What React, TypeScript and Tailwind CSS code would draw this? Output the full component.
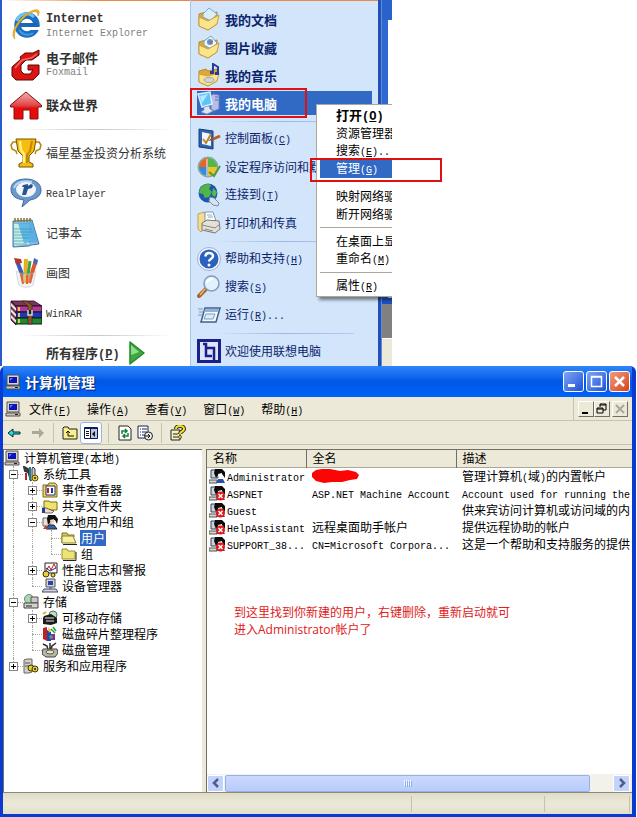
import type { ReactNode } from "react";

/* ---------- text ---------- */

// "&F" marks the access key, latin runs use the half-width face
const Label = ({ text, bold = false }: { text: string; bold?: boolean }) => {
  const runs = text.split(/([\x20-\x7e]+)/).filter(Boolean);
  return (
    <span className={bold ? "whitespace-pre font-bold text-[13px]" : "whitespace-pre text-[12px]"}>
      {runs.map((run, i) => {
        if (!/^[\x20-\x7e]+$/.test(run)) return run;
        const [before, after] = run.split("&");
        return (
          <span
            key={i}
            className={
              bold
                ? "font-['Liberation_Mono',monospace] text-[12px] leading-none"
                : "font-['Liberation_Mono',monospace] text-[10px] leading-none"
            }
          >
            {before}
            {after && (
              <>
                <u>{after[0]}</u>
                {after.slice(1)}
              </>
            )}
          </span>
        );
      })}
    </span>
  );
};

/* ---------- start menu icons ---------- */

const IeIcon = () => (
  <svg viewBox="0 0 32 32" className="size-8">
    <circle cx="17" cy="16" r="9.5" fill="none" stroke="#1c6fc4" strokeWidth="6.500" />
    <path d="M7 12a10 10 0 0 1 17-4" fill="none" stroke="#6fc3f2" strokeWidth="3" />
    <path d="M9 21a10 10 0 0 0 14 3" fill="none" stroke="#3f9be0" strokeWidth="2" />
    <path d="M10 14h18v4H10z" fill="#1b66b8" />
    <path d="M20 18h10v3H20z" fill="#fff" />
    <path d="M5 30C-2 25 10 5 24 1c6-1 6 2 4 6 0-4-2-5-5-4C12 7 2 22 5 30z" fill="#f0b629" stroke="#c98a10" strokeWidth=".5" />
  </svg>
);

const FoxmailIcon = () => (
  <svg viewBox="0 0 32 32" className="size-8">
    <path d="M29 1v5l-7 5h-6l-5 5v6l3 3h6l3-4h-5v-5h11v9l-6 6H6l-4-4v-9l9-8-1-2 5-4 8 0z" fill="#dc1414" stroke="#5c0606" />
    <path d="M5 19l7-8 9-2 6-4" fill="none" stroke="#f46a5e" strokeWidth="1.500" />
  </svg>
);

const HouseIcon = () => (
  <svg viewBox="0 0 32 32" className="size-8">
    <defs>
      <linearGradient id="roof" x2="0" y2="1">
        <stop offset="0" stopColor="#f7b0b0" />
        <stop offset=".5" stopColor="#df4444" />
        <stop offset=".6" stopColor="#e80b0b" />
      </linearGradient>
    </defs>
    <path d="M16 3l15.500 13v2H28v12h-8v-9h-7v9H4V18H.5v-2z" fill="url(#roof)" stroke="#8a1212" />
  </svg>
);

const TrophyIcon = () => (
  <svg viewBox="0 0 32 32" className="size-8">
    <path d="M7 5H3L1 8l1 4 4 2 1 3M25 5h4l2 3-1 4-4 2-1 3" fill="none" stroke="#b8860b" strokeWidth="1.500" />
    <path d="M6 2h20l-2 12-5 5v6l4 2v3H9v-3l4-2v-6l-5-5z" fill="#f5bd0c" stroke="#7a5200" />
    <path d="M10 4l1 9 3 4v9" fill="none" stroke="#ffee86" strokeWidth="2.500" />
    <path d="M22 4l-2 10-3 4v8" fill="none" stroke="#c98500" strokeWidth="2" />
  </svg>
);

const RealIcon = () => (
  <svg viewBox="0 0 32 32" className="size-8">
    <path d="M16 2c8 0 15 4 15 11 0 6-5 9-11 10l-8 7 2-7C6 22 1 19 1 12 1 5 8 2 16 2z" fill="#6b98cc" stroke="#3d6aa0" />
    <path d="M4 11c2-6 10-8 18-6" fill="none" stroke="#b9d7f2" strokeWidth="2" />
    <ellipse cx="16" cy="12.500" rx="10" ry="7.500" fill="#f1f6fc" />
    <path d="M13 8l5-1v2l3-2 2 1-1 3-4 1-2 6h-4l2-8h-2z" fill="#26548f" />
  </svg>
);

const NotepadIcon = () => (
  <svg viewBox="0 0 32 32" className="size-8">
    <path d="M3 4l19-1 7 24-8 1-2 1-16 1z" fill="#8fbad6" stroke="#417ca8" />
    <path d="M4 7h15v20L4 29z" fill="#c8f0e2" />
    <path d="M8 6l14-1 6 20-14 1z" fill="#50aee6" opacity=".85" />
    <path d="M4 12h18M4 15h19M4 18h15M4 21h15M4 24h10M4 27h13" stroke="#3b97b7" strokeWidth=".7" />
    <path d="M5 1v4m3-4v4m3-4v4m3-4v4m3-4v4m3-4v4" stroke="#8b7630" strokeWidth="1.500" />
  </svg>
);

const PaintIcon = () => (
  <svg viewBox="0 0 32 32" className="size-8">
    <path d="M7 4l8 21" stroke="#3a5bb8" strokeWidth="4" />
    <path d="M4 1l7 1 1 4-6 1z" fill="#b8352a" />
    <path d="M16 2l-1 24" stroke="#e5b020" strokeWidth="4" />
    <path d="M20 4l-3 22" stroke="#3da146" strokeWidth="3" />
    <path d="M25 6l-6 20" stroke="#e0562b" strokeWidth="4" />
    <path d="M24 1l4 2-1 5-4-2z" fill="#4868b0" />
    <path d="M6 14l3 14c2 3 12 3 14 0l3-14c-4 3-16 3-20 0z" fill="#dbe5ea" opacity=".4" stroke="#8fa3ad" />
    <path d="M11 17l2 10M17 18v9M22 17l-2 9" stroke="#e8632a" strokeWidth="2" />
  </svg>
);

const WinrarIcon = () => (
  <svg viewBox="0 0 32 32" className="size-8">
    <path d="M1 4l5 5v19l-5-5zM1 4h23l8 5H6z" fill="#7a3560" stroke="#1d0d16" strokeWidth=".8" />
    <path d="M6 9h26v6H6z" fill="#b03a93" stroke="#2b0f24" />
    <path d="M6 15h26v6H6z" fill="#2436b4" stroke="#0b1033" />
    <path d="M6 21h26v6H6z" fill="#218832" stroke="#07240c" />
    <path d="M1 6l5 5v3L1 9zm0 6l5 5v3l-5-5zm0 6l5 5v3l-5-5z" fill="#ede6da" />
    <path d="M9 10v4m0 2v4m0 2v4" stroke="#e8c54c" strokeWidth="2" />
    <path d="M16 4l6 4v19h-4V9l-6-5z" fill="#87572c" stroke="#3f240d" strokeWidth=".7" />
    <path d="M18 13v5h4v-5" fill="#1d1d1d" stroke="#d9d9d9" strokeWidth="1.500" />
  </svg>
);

const GreenArrow = () => (
  <svg viewBox="0 0 18 24" className="h-6 w-[18px]">
    <path d="M2 1l14 11L2 23z" fill="#3fa83f" stroke="#238a2b" strokeWidth="1.500" strokeLinejoin="round" />
    <path d="M3 4l8 7-8 3z" fill="#8fdc8d" />
  </svg>
);

const FolderBase = ({ children }: { children?: ReactNode }) => (
  <svg viewBox="0 0 24 24" className="size-6">
    <path d="M2 7l7-2 2 2 9-2v12l-9 6-9-4z" fill="#dba93b" stroke="#b98a2b" />
    {children}
    <path d="M2 10l9 4 11-6-2 9-9 6-9-4z" fill="#fae58d" stroke="#c99f3d" />
  </svg>
);

const DocsIcon = () => (
  <FolderBase>
    <path d="M6 7l6-6 8 6-6 7-8-4z" fill="#d9edfb" stroke="#86a9c6" />
  </FolderBase>
);

const PicturesIcon = () => (
  <FolderBase>
    <path d="M7 6l7-5 6 7-6 6-7-4z" fill="#eef6fc" stroke="#7e9fba" />
    <circle cx="13" cy="7" r="3" fill="#4a9ad6" />
    <circle cx="14" cy="7" r="1.500" fill="#d65a3c" />
  </FolderBase>
);

const MusicIcon = () => (
  <svg viewBox="0 0 24 24" className="size-6">
    <path d="M2 8l7-2 2 2 9-2v12l-9 5-9-4z" fill="#dba93b" stroke="#b98a2b" />
    <path d="M2 11l9 2 11-3-2 8-9 5-9-4z" fill="#fae58d" stroke="#c99f3d" />
    <ellipse cx="12" cy="17" rx="5" ry="2.500" fill="#cfd3dd" stroke="#8f95a8" strokeWidth=".7" />
    <path d="M16 9V1l5 3v6" fill="none" stroke="#2c3c94" strokeWidth="2" />
    <path d="M13 8h4v3h-4zM18 9h4v3h-4z" fill="#2c3c94" />
  </svg>
);

const ComputerIcon = () => (
  <svg viewBox="0 0 24 24" className="size-6">
    <path d="M16 3l6 1v14l-5 2-3-2V5z" fill="#b5bfe8" stroke="#6f7bb8" />
    <path d="M18 6h3M18 9h3" stroke="#5b68ab" />
    <path d="M1 3l12-2 2 12-10 3z" fill="#5cc4fb" stroke="#dfeefa" strokeWidth="1.500" />
    <path d="M3 5l8-2-6 9z" fill="#b5e9ff" />
    <path d="M7 16l5-1 1 3 3 2-6 3-6-2 3-2z" fill="#dce4f5" stroke="#8b9ac4" strokeWidth=".7" />
  </svg>
);

const ControlIcon = () => (
  <svg viewBox="0 0 24 24" className="size-6">
    <path d="M2 2l14 2v18L2 20z" fill="#2c62ad" stroke="#1b3f78" />
    <path d="M5 5l9 2v12l-9-2z" fill="#eef6ff" />
    <path d="M6 12l3 4 5-9" fill="none" stroke="#c0851d" strokeWidth="2" />
    <path d="M14 13l9-4" stroke="#b95b2a" strokeWidth="3" />
    <path d="M11 14l4-3 1 2z" fill="#43546e" />
  </svg>
);

const ProgramsIcon = () => (
  <svg viewBox="0 0 24 24" className="size-6">
    <circle cx="11" cy="12" r="10" fill="#8fb7a0" stroke="#8ba0a8" />
    <path d="M11 12V3a9 9 0 0 0-9 9z" fill="#e0682b" />
    <path d="M11 12h9a9 9 0 0 0-9-9z" fill="#50b848" />
    <path d="M11 12H2a9 9 0 0 0 9 9z" fill="#3b8ad8" />
    <path d="M11 12v9a9 9 0 0 0 9-9z" fill="#f2c230" />
    <path d="M10 4v17" stroke="#f2f6e8" />
    <path d="M12 17l5 4 6-10" fill="none" stroke="#4d9a3a" strokeWidth="2" />
  </svg>
);

const GlobeIcon = () => (
  <svg viewBox="0 0 24 24" className="size-6">
    <circle cx="11" cy="10" r="9.500" fill="#1c56ad" />
    <path d="M3 6c3-5 8-6 11-4l-2 4 3 3-3 5-4 1-2-4-4-1z" fill="#4fb547" />
    <path d="M16 5l4 4-2 5-3-2z" fill="#57bd4c" />
    <path d="M13 14l4 1 5 5-1 3-5-1-4-4z" fill="#d6e2f0" stroke="#7b8ea8" />
  </svg>
);

const PrinterIcon = () => (
  <svg viewBox="0 0 24 24" className="size-6">
    <path d="M1 3l6-2 4 10-7 10-3-3z" fill="#f3dd94" stroke="#c3a150" />
    <path d="M8 1h8l3 9H8z" fill="#fff" stroke="#7f96b0" />
    <path d="M10 4h5M11 6h5" stroke="#8dabca" />
    <path d="M5 12l5-3 12 1 1 8-5 4-13-3z" fill="#e4e1da" stroke="#7c7872" />
    <path d="M5 14l13 3 5-4M8 18l8 2" fill="none" stroke="#8a8680" />
  </svg>
);

const HelpIcon = () => (
  <svg viewBox="0 0 24 24" className="size-6">
    <circle cx="12" cy="12" r="10.500" fill="#2b62c0" stroke="#f4f8ff" strokeWidth="2" />
    <circle cx="12" cy="12" r="11.500" fill="none" stroke="#7f94bd" strokeWidth=".7" />
    <path d="M8.500 9.500c0-5 7.500-4.500 7.500-.5 0 3-4 3-4 5.500" fill="none" stroke="#fff" strokeWidth="2.500" />
    <circle cx="12" cy="18" r="1.500" fill="#fff" />
  </svg>
);

const SearchIcon = () => (
  <svg viewBox="0 0 24 24" className="size-6">
    <path d="M9 14l-7 7" stroke="#a8642c" strokeWidth="4" strokeLinecap="round" />
    <path d="M8 14l-5 6" stroke="#f0b47a" strokeWidth="1.500" />
    <circle cx="14.500" cy="8.500" r="7.500" fill="#dff2fd" stroke="#8699b8" strokeWidth="1.500" />
    <path d="M10 8c0-3 3-4 6-4" fill="none" stroke="#fff" strokeWidth="2" />
  </svg>
);

const RunIcon = () => (
  <svg viewBox="0 0 24 24" className="size-6">
    <path d="M8 5h15l-4 14H4z" fill="#f3faff" stroke="#3f6088" strokeWidth="1.500" />
    <path d="M8 6h14l-1 3H7z" fill="#8fb4d8" />
    <path d="M9 11h9l-2 5H7z" fill="#dcecf6" stroke="#7b9cbd" />
    <path d="M1 6h5M2 9h4M1 12h4" stroke="#7b9cbd" />
  </svg>
);

const LenovoIcon = () => (
  <svg viewBox="0 0 24 24" className="size-6">
    <path d="M1.500 1.500h21v21h-21z" fill="#dce6f8" stroke="#1b1f8a" strokeWidth="3" />
    <path d="M6 5h3v12h6M10 9h7v12" fill="none" stroke="#1b1f8a" strokeWidth="2.500" />
  </svg>
);

/* ---------- console icons ---------- */

const PcIcon = () => (
  <svg viewBox="0 0 16 16" className="size-4 shrink-0">
    <path d="M2 1h12v10H2z" fill="#d8d4c8" stroke="#55534c" />
    <path d="M4 3h8v6H4z" fill="#0a12b8" />
    <path d="M5 4h3L5 7z" fill="#5a7cf2" />
    <path d="M1 12h14v3H1z" fill="#c9c5b8" stroke="#55534c" />
    <path d="M10 13.500h3" stroke="#222" />
  </svg>
);

const ToolsIcon = () => (
  <svg viewBox="0 0 16 16" className="size-4 shrink-0">
    <path d="M1 1l4 2v3l-3-1zM5 5l3 10" stroke="#33393f" strokeWidth="2" fill="#555" />
    <path d="M7 1v13" stroke="#1e7d8a" strokeWidth="2" />
    <path d="M10 1l2 2v9h-3V3z" fill="#c8d0d4" stroke="#333" />
    <path d="M3 7v7" stroke="#b3261d" strokeWidth="2" />
    <circle cx="12" cy="12" r="3" fill="#e7cf3b" stroke="#5d4f08" />
    <circle cx="12" cy="12" r="1" fill="#222" />
  </svg>
);

const EventIcon = () => (
  <svg viewBox="0 0 16 16" className="size-4 shrink-0">
    <path d="M1 3h5l1-2h6l2 2v12H1z" fill="#e9d85c" stroke="#7a6c16" />
    <path d="M4 4h9v9H4z" fill="#fff" stroke="#28307c" />
    <path d="M6 6v5" stroke="#c12020" strokeWidth="2" />
    <path d="M10 6v5" stroke="#2434a8" strokeWidth="2" />
  </svg>
);

const SharedIcon = () => (
  <svg viewBox="0 0 16 16" className="size-4 shrink-0">
    <path d="M2 3h5l1 1h7v8H2z" fill="#efe36c" stroke="#7a6c16" />
    <path d="M0 10h4l5 2 3 1-2 2H4l-4-1z" fill="#f3d9bd" stroke="#333" strokeWidth=".7" />
    <path d="M0 10h3v5H0z" fill="#1d3d9c" />
  </svg>
);

const UsersIcon = () => (
  <svg viewBox="0 0 16 16" className="size-4 shrink-0">
    <path d="M1 4h7v8H1z" fill="#e6e2d6" stroke="#666" />
    <path d="M6 1h7l3 4-1 5-2-4-4 1-3 4-1-6z" fill="#111" />
    <path d="M8 6l4-1v4l-3 2z" fill="#f6d2b4" />
    <path d="M4 15l3-4h5l3 4z" fill="#3b62a8" stroke="#16233f" />
    <path d="M1 15l3-4 2 4z" fill="#c23a2c" />
  </svg>
);

const FolderOpenIcon = () => (
  <svg viewBox="0 0 16 16" className="size-4 shrink-0">
    <path d="M1 13V3h5l1 2h6v2" fill="#d8cc5c" stroke="#7d7328" />
    <path d="M1 13V6h11l3 7z" fill="#f7f2a0" stroke="#8a8030" />
    <path d="M2 14.500h14" stroke="#222" />
  </svg>
);

const FolderIcon = () => (
  <svg viewBox="0 0 16 16" className="size-4 shrink-0">
    <path d="M1 13V3h5l1 2h7v8z" fill="#efe472" stroke="#9a8f38" />
    <path d="M2 14.500h13V6" fill="none" stroke="#222" />
  </svg>
);

const PerfIcon = () => (
  <svg viewBox="0 0 16 16" className="size-4 shrink-0">
    <path d="M3 1h12v10H3z" fill="#fff" stroke="#222" />
    <path d="M4 9l3-5 2 4 3-6 2 4" fill="none" stroke="#c01818" />
    <path d="M4 6l4 3 6-3" fill="none" stroke="#1a28a8" />
    <circle cx="4" cy="12" r="3" fill="#e7cf3b" stroke="#3d3405" />
    <circle cx="11" cy="13" r="2" fill="#e7cf3b" stroke="#3d3405" />
  </svg>
);

const DeviceIcon = () => (
  <svg viewBox="0 0 16 16" className="size-4 shrink-0">
    <path d="M4 1h9v8H4z" fill="#d8d4c8" stroke="#555" />
    <path d="M6 3h5v4H6z" fill="#1f45c4" />
    <path d="M2 11h12l2 3H0z" fill="#cfd2dc" stroke="#444a66" />
    <path d="M7 9h3v2H7z" fill="#777" />
  </svg>
);

const StorageIcon = () => (
  <svg viewBox="0 0 16 16" className="size-4 shrink-0">
    <circle cx="6" cy="5" r="4.500" fill="#a9d8b0" stroke="#6d8a72" />
    <path d="M8 3h7v6H8z" fill="#c9c9c9" stroke="#555" />
    <path d="M1 9h14v5H1z" fill="#d4d2ca" stroke="#444" />
    <path d="M3 12h6" stroke="#222" />
  </svg>
);

const RemovableIcon = () => (
  <svg viewBox="0 0 16 16" className="size-4 shrink-0">
    <circle cx="11" cy="5" r="4" fill="#b8e0c8" stroke="#55705d" />
    <path d="M2 6l7-2 6 4v5l-6 2-8-1V8z" fill="#1c1c1c" />
    <path d="M3 8h9M4 11h8" stroke="#e4e4e4" />
    <path d="M1 4l3-2" stroke="#d5b52b" strokeWidth="2" />
  </svg>
);

const DefragIcon = () => (
  <svg viewBox="0 0 16 16" className="size-4 shrink-0">
    <path d="M1 2l4-1v14l-4-2z" fill="#c52020" />
    <path d="M5 4l4 2v9H5z" fill="#263fc0" />
    <path d="M9 8h4v6H9z" fill="#8b2aa0" />
    <path d="M6 1l3 3-2 3z" fill="#e8c522" />
    <path d="M11 1l3 4M9 3l4 4" stroke="#27a03c" strokeWidth="1.500" />
    <path d="M7 10l3-1 1 3-3 1z" fill="#2fb848" />
  </svg>
);

const DiskIcon = () => (
  <svg viewBox="0 0 16 16" className="size-4 shrink-0">
    <path d="M1 2l4 2 1 4M14 1l-4 3-1 4M8 1v6" fill="none" stroke="#2b2b2b" strokeWidth="1.500" />
    <path d="M1 7h14l1 4-3 4H4l-4-3z" fill="#b9b6ab" stroke="#444" />
    <ellipse cx="8" cy="10" rx="4" ry="2" fill="#e6e8a8" stroke="#555" />
  </svg>
);

const ServicesIcon = () => (
  <svg viewBox="0 0 16 16" className="size-4 shrink-0">
    <path d="M1 2l3-1h5v13l-3 1H1z" fill="#d2cfc5" stroke="#666" />
    <path d="M2 5h5M2 8h5" stroke="#555" />
    <circle cx="8" cy="10" r="3" fill="#e7cf3b" stroke="#3d3405" />
    <circle cx="12" cy="11" r="3" fill="#e7cf3b" stroke="#3d3405" />
    <circle cx="12" cy="11" r="1" fill="#222" />
  </svg>
);

const AccountIcon = ({ disabled }: { disabled: boolean }) => (
  <svg viewBox="0 0 16 16" className="size-4 shrink-0">
    <path d="M2 2h7v8H2z" fill="#c8d3df" stroke="#3a434c" />
    <path d="M0 12h8v3H0z" fill="#d8d4c8" stroke="#555" />
    <path d="M6 1h7l3 3v6l-3-4-4 1-2 3-2-5z" fill="#0c0c0c" />
    <path d="M9 6l4-1v4l-3 2z" fill="#fff" />
    <path d="M7 15l2-4h5l2 4z" fill="#2b4fb0" />
    {disabled && (
      <>
        <circle cx="11.500" cy="11" r="4.500" fill="#e01818" />
        <path d="M9.500 9l4 4m0-4l-4 4" stroke="#fff" strokeWidth="1.500" />
      </>
    )}
  </svg>
);

/* ---------- toolbar icons ---------- */

const BackIcon = () => (
  <svg viewBox="0 0 14 12" className="h-3 w-3.5">
    <path d="M1 6l5-4v3h7v2H6v3z" fill="#25dfe8" stroke="#07262b" />
  </svg>
);

const ForwardIcon = () => (
  <svg viewBox="0 0 14 12" className="h-3 w-3.5">
    <path d="M13 6L8 1v3H1v3h7v4z" fill="#aca899" />
  </svg>
);

const UpIcon = () => (
  <svg viewBox="0 0 16 14" className="h-3.5 w-4">
    <path d="M1 13V2l1-1h4l1 2h8v10z" fill="#faf08a" stroke="#222" />
    <path d="M12 10H6V6M4 7l2-2 2 2" fill="none" stroke="#111" />
  </svg>
);

const TreeToggleIcon = () => (
  <svg viewBox="0 0 14 12" className="h-3 w-3.5">
    <path d="M.5.5h13v11H.5z" fill="#fff" stroke="#111a5c" />
    <path d="M1 1h12v1H1z" fill="#111a5c" />
    <path d="M2 4.500h3M2 6.500h3M2 8.500h3" stroke="#111" />
    <path d="M7 2h6v9H7z" fill="#b8c4e8" />
    <path d="M6.500 2v9" stroke="#111" />
    <path d="M11 4v6L8 7z" fill="#111" />
  </svg>
);

const RefreshIcon = () => (
  <svg viewBox="0 0 14 16" className="h-4 w-3.5">
    <path d="M1 1h9l3 3v11H1z" fill="#fff" stroke="#222" />
    <path d="M4 9V6h4M7 4l2 2-2 2M10 8v3H6M7 9l-2 2 2 2" fill="none" stroke="#15803d" strokeWidth="1.500" />
  </svg>
);

const ExportIcon = () => (
  <svg viewBox="0 0 16 16" className="size-4">
    <path d="M1 1h10v12H1z" fill="#fff" stroke="#1b2256" />
    <path d="M3 4h1m1 0h5M3 7h1m1 0h5M3 10h1m1 0h3" stroke="#1b2256" />
    <circle cx="11.500" cy="11" r="4" fill="#eee" stroke="#222" />
    <path d="M8 11h5m-2-2l2 2-2 2" fill="none" stroke="#111" />
  </svg>
);

const PropsHelpIcon = () => (
  <svg viewBox="0 0 16 16" className="size-4">
    <path d="M1 5h9v10H1z" fill="#f4f0c0" stroke="#222" />
    <path d="M3 9h5M3 12h5" stroke="#222" />
    <path d="M6 4c0-4 8-4 8 0 0 3-4 2-4 5" fill="none" stroke="#222" strokeWidth="4" />
    <path d="M6 4c0-4 8-4 8 0 0 3-4 2-4 5" fill="none" stroke="#f5e31a" strokeWidth="2" />
    <circle cx="10" cy="12" r="1.500" fill="#f5e31a" stroke="#222" strokeWidth=".7" />
  </svg>
);

/* ---------- start menu ---------- */

const pinned = [
  { icon: <IeIcon />, title: "Internet", sub: "Internet Explorer" },
  { icon: <FoxmailIcon />, title: "电子邮件", sub: "Foxmail" },
  { icon: <HouseIcon />, title: "联众世界", sub: "" },
];

const recent = [
  { icon: <TrophyIcon />, title: "福星基金投资分析系统" },
  { icon: <RealIcon />, title: "RealPlayer" },
  { icon: <NotepadIcon />, title: "记事本" },
  { icon: <PaintIcon />, title: "画图" },
  { icon: <WinrarIcon />, title: "WinRAR" },
];

const places = [
  [
    { icon: <DocsIcon />, title: "我的文档", bold: true },
    { icon: <PicturesIcon />, title: "图片收藏", bold: true },
    { icon: <MusicIcon />, title: "我的音乐", bold: true },
    { icon: <ComputerIcon />, title: "我的电脑", bold: true, active: true },
  ],
  [
    { icon: <ControlIcon />, title: "控制面板(&C)" },
    { icon: <ProgramsIcon />, title: "设定程序访问和默" },
    { icon: <GlobeIcon />, title: "连接到(&T)" },
    { icon: <PrinterIcon />, title: "打印机和传真" },
  ],
  [
    { icon: <HelpIcon />, title: "帮助和支持(&H)" },
    { icon: <SearchIcon />, title: "搜索(&S)" },
    { icon: <RunIcon />, title: "运行(&R)..." },
  ],
  [{ icon: <LenovoIcon />, title: "欢迎使用联想电脑" }],
] as { icon: ReactNode; title: string; bold?: boolean; active?: boolean }[][];

const contextGroups = [
  ["打开(&O)", "资源管理器", "搜索(&E)...", "管理(&G)"],
  ["映射网络驱", "断开网络驱"],
  ["在桌面上显", "重命名(&M)"],
  ["属性(&R)"],
];

const ContextMenu = () => (
  <div className="absolute top-[104px] left-[316px] w-40 border border-[#aca899] bg-white p-px pl-[3px] text-black shadow-[3px_3px_3px_rgba(0,0,0,0.45)]">
    {contextGroups.map((group, g) => (
      <div key={g}>
        {g === 1 && <div className="h-[9px]" />}
        {g > 1 && (
          <div className="flex h-[9px] items-center">
            <div className="h-px w-full bg-[#aca899]" />
          </div>
        )}
        {group.map((item) => (
          <button
            key={item}
            className={
              item.startsWith("管理")
                ? "flex h-[18px] w-full items-center bg-[#316ac5] pl-4 text-white"
                : "flex h-[18px] w-full items-center pl-4"
            }
          >
            <Label text={item} bold={item.startsWith("打开")} />
          </button>
        ))}
      </div>
    ))}
  </div>
);

const StartMenu = () => (
  <section className="relative">
    <div className="relative flex w-[392px] overflow-hidden leading-none">
      <div className="w-[190px] shrink-0 border-l-2 border-[#2b5cc8] bg-white">
        <div className="h-px bg-gradient-to-r from-white via-[#e8894a] to-[#e8894a]" />
        <nav className="flex flex-col pt-1 pb-px text-[#333]">
          {pinned.map((item) => (
            <button key={item.title} className="flex h-10 items-center gap-1 pl-2 text-left">
              {item.icon}
              <span className="flex flex-col leading-3">
                <Label text={item.title} bold />
                {item.sub && (
                  <span className="text-[#808080]">
                    <Label text={item.sub} />
                  </span>
                )}
              </span>
            </button>
          ))}
          <div className="flex h-2 items-center px-4">
            <div className="h-px w-full bg-gradient-to-r from-white via-[#c8c8c0] to-white" />
          </div>
          {recent.map((item) => (
            <button key={item.title} className="flex h-10 items-center gap-1 pl-2 text-left">
              {item.icon}
              <Label text={item.title} />
            </button>
          ))}
          <div className="flex h-1 items-center px-4">
            <div className="h-px w-full bg-gradient-to-r from-white via-[#c8c8c0] to-white" />
          </div>
          <button className="flex h-7 items-center gap-2 pt-1 pl-11">
            <Label text="所有程序(&P)" bold />
            <GreenArrow />
          </button>
        </nav>
      </div>

      <div className="w-[188px] shrink-0 border-l border-[#a9c4ee] bg-[#d3e5fa]">
        <div className="h-px bg-[#e8894a]" />
        <nav className="flex flex-col pt-1 pb-px text-[#0a246a]">
          {places.map((group, g) => (
            <div key={g}>
              {g > 0 && (
                <div className="flex h-2 items-center px-6">
                  <div className="h-px w-full bg-gradient-to-r from-[#d3e5fa] via-[#9bb8e4] to-[#b4cbee]" />
                </div>
              )}
              {group.map((item) => (
                <div key={item.title} className="flex h-7 items-center pr-1.5 pl-1.5">
                  <button
                    className={
                      item.active
                        ? "flex h-6 w-full items-center gap-1 overflow-hidden bg-[#316ac5] text-white"
                        : "flex h-6 w-full items-center gap-1 overflow-hidden"
                    }
                  >
                    <span className="shrink-0">{item.icon}</span>
                    <Label text={item.title} bold={item.bold} />
                  </button>
                </div>
              ))}
            </div>
          ))}
        </nav>
      </div>

      {/* menu frame and the slice of desktop right of it */}
      <div className="w-1 shrink-0 border-r border-[#5f8ae0] bg-[#2450b4]" />
      <div className="flex flex-1 flex-col">
        <div className="h-5 bg-[#2a62cc]" />
        <div className="flex-1 border-l-6 border-[#2f68d0] bg-white" />
        <div className="h-1.5 bg-[#1f50c0]" />
        <div className="h-[34px] bg-[#808080]" />
        <div className="h-7 border-t border-white bg-[#ece9d8]" />
      </div>
      <ContextMenu />
    </div>
    <div className="absolute top-[88px] left-[190px] h-[30px] w-[117px] border-2 border-[#e01010]" />
    <div className="absolute top-[158px] left-[310px] h-6 w-[132px] border-2 border-[#e01010]" />
  </section>
);

/* ---------- computer management window ---------- */

type Guide = "line" | "tee" | "end" | "plus" | "minus" | "lastplus";

const tree: { guides: Guide[]; icon: ReactNode; title: string; selected?: boolean }[] = [
  { guides: [], icon: <PcIcon />, title: "计算机管理(本地)" },
  { guides: ["minus"], icon: <ToolsIcon />, title: "系统工具" },
  { guides: ["line", "plus"], icon: <EventIcon />, title: "事件查看器" },
  { guides: ["line", "plus"], icon: <SharedIcon />, title: "共享文件夹" },
  { guides: ["line", "minus"], icon: <UsersIcon />, title: "本地用户和组" },
  { guides: ["line", "line", "tee"], icon: <FolderOpenIcon />, title: "用户", selected: true },
  { guides: ["line", "line", "end"], icon: <FolderIcon />, title: "组" },
  { guides: ["line", "plus"], icon: <PerfIcon />, title: "性能日志和警报" },
  { guides: ["line", "end"], icon: <DeviceIcon />, title: "设备管理器" },
  { guides: ["minus"], icon: <StorageIcon />, title: "存储" },
  { guides: ["line", "plus"], icon: <RemovableIcon />, title: "可移动存储" },
  { guides: ["line", "tee"], icon: <DefragIcon />, title: "磁盘碎片整理程序" },
  { guides: ["line", "end"], icon: <DiskIcon />, title: "磁盘管理" },
  { guides: ["lastplus"], icon: <ServicesIcon />, title: "服务和应用程序" },
];

const GuideCell = ({ kind }: { kind: Guide }) => (
  <span className="relative flex h-4 w-[19px] shrink-0 items-center justify-center">
    <span
      className={
        kind === "end" || kind === "lastplus"
          ? "absolute top-0 left-[9px] h-2 border-l border-dotted border-[#aca899]"
          : "absolute top-0 left-[9px] h-4 border-l border-dotted border-[#aca899]"
      }
    />
    {kind !== "line" && (
      <span className="absolute top-2 left-[9px] w-2.5 border-t border-dotted border-[#aca899]" />
    )}
    {(kind === "plus" || kind === "minus" || kind === "lastplus") && (
      <button
        aria-label={kind === "minus" ? "折叠" : "展开"}
        className="relative size-[9px] border border-[#848484] bg-white"
      >
        <svg viewBox="0 0 7 7" className="block size-[7px]">
          <path d={kind === "minus" ? "M1 3.500h5" : "M1 3.500h5M3.500 1v5"} stroke="#000" />
        </svg>
      </button>
    )}
  </span>
);

const accounts = [
  { name: "Administrator", full: "", desc: "管理计算机(域)的内置帐户", disabled: false },
  { name: "ASPNET", full: "ASP.NET Machine Account", desc: "Account used for running the", disabled: true },
  { name: "Guest", full: "", desc: "供来宾访问计算机或访问域的内", disabled: true },
  { name: "HelpAssistant", full: "远程桌面助手帐户", desc: "提供远程协助的帐户", disabled: true },
  { name: "SUPPORT_38...", full: "CN=Microsoft Corpora...", desc: "这是一个帮助和支持服务的提供", disabled: true },
];

const menus = ["文件(&F)", "操作(&A)", "查看(&V)", "窗口(&W)", "帮助(&H)"];

const Divider = () => <div className="mx-1.5 h-5 w-px bg-[#c5c2b0]" />;

const TitleBar = () => (
  <header className="flex h-[31px] items-center gap-1 bg-gradient-to-b from-[#2f86fb] via-[#0058e6] to-[#0062f8] pr-0.5 pl-0.5 text-white">
    <PcIcon />
    <h1 className="flex-1 text-[14px] font-bold [text-shadow:1px_1px_1px_#0a246a]">计算机管理</h1>
    <div className="flex gap-0.5">
      <button aria-label="最小化" className="size-[21px] rounded-[3px] border border-white bg-gradient-to-br from-[#7fa4f5] to-[#1f4fd8]">
        <svg viewBox="0 0 19 19">
          <path d="M4 12h7v3H4z" fill="#fff" />
        </svg>
      </button>
      <button aria-label="最大化" className="size-[21px] rounded-[3px] border border-white bg-gradient-to-br from-[#7fa4f5] to-[#1f4fd8]">
        <svg viewBox="0 0 19 19">
          <path d="M4.500 5h10v9.500h-10zM4 4.500h11" fill="none" stroke="#fff" strokeWidth="1.500" />
        </svg>
      </button>
      <button aria-label="关闭" className="size-[21px] rounded-[3px] border border-white bg-gradient-to-br from-[#f09a7c] to-[#d43f14]">
        <svg viewBox="0 0 19 19">
          <path d="M5 5l9 9m0-9l-9 9" stroke="#fff" strokeWidth="2.500" />
        </svg>
      </button>
    </div>
  </header>
);

const MenuBar = () => (
  <div className="flex h-6 items-center border-b border-[#c5c2b0] pl-0.5">
    <PcIcon />
    <nav className="flex flex-1">
      {menus.map((menu) => (
        <button key={menu} className="px-2">
          <Label text={menu} />
        </button>
      ))}
    </nav>
    <div className="flex h-full items-center border-l border-[#c5c2b0] pr-1 pl-1">
      <button aria-label="最小化子窗口" className="size-4 border border-white border-r-[#716f64] border-b-[#716f64]">
        <svg viewBox="0 0 14 14">
          <path d="M3 10h6v2H3z" />
        </svg>
      </button>
      <button aria-label="还原子窗口" className="size-4 border border-white border-r-[#716f64] border-b-[#716f64]">
        <svg viewBox="0 0 14 14">
          <path d="M5 5V2h6v6H8M5 3h6M2 6h6v5H2zM2 7h6" fill="none" stroke="#000" />
        </svg>
      </button>
      <button aria-label="关闭子窗口" className="ml-0.5 size-4 border border-white border-r-[#716f64] border-b-[#716f64]">
        <svg viewBox="0 0 14 14">
          <path d="M3 3l8 8m0-8l-8 8" stroke="#aca899" strokeWidth="2" />
        </svg>
      </button>
    </div>
  </div>
);

const ToolBar = () => (
  <div className="flex h-6 items-center border-b border-[#c5c2b0] pl-1">
    <button aria-label="后退" className="flex size-5 items-center"><BackIcon /></button>
    <button aria-label="前进" className="ml-1 flex h-5 w-4 items-center"><ForwardIcon /></button>
    <Divider />
    <button aria-label="上一级" className="flex size-5 items-center justify-center"><UpIcon /></button>
    <button aria-label="显示/隐藏控制台树" className="flex h-[22px] w-[22px] items-center justify-center rounded-[3px] border border-[#98b5e2] bg-white">
      <TreeToggleIcon />
    </button>
    <Divider />
    <button aria-label="刷新" className="flex size-5 items-center justify-center"><RefreshIcon /></button>
    <button aria-label="导出列表" className="flex size-5 items-center justify-center"><ExportIcon /></button>
    <Divider />
    <button aria-label="帮助" className="flex size-5 items-center justify-center"><PropsHelpIcon /></button>
  </div>
);

const TreePane = () => (
  <aside className="w-[199px] shrink-0 border-t border-l border-[#716f64] bg-white">
    <ul>
      {tree.map((row) => (
        <li key={row.title} className="flex h-4 items-center">
          {row.guides.map((kind, i) => (
            <GuideCell key={i} kind={kind} />
          ))}
          {row.icon}
          <span className={row.selected ? "ml-[3px] bg-[#316ac5] px-px text-white" : "ml-[3px] px-px"}>
            <Label text={row.title} />
          </span>
        </li>
      ))}
    </ul>
  </aside>
);

const ScrollBar = () => (
  <div className="mt-auto flex h-[18px] items-center gap-px bg-[#f3f2ea]">
    <button aria-label="向左" className="flex size-[17px] items-center justify-center rounded-[2px] border border-white bg-[#c3d3fd]">
      <svg viewBox="0 0 10 10" className="size-2.5">
        <path d="M7 1L3 5l4 4" fill="none" stroke="#4d6185" strokeWidth="2.500" />
      </svg>
    </button>
    <div className="flex h-[17px] flex-1 items-center justify-center gap-px rounded-[2px] border border-[#98b0e8] bg-gradient-to-b from-[#cbd9ff] to-[#b8cbf9]">
      {[0, 1, 2, 3].map((i) => (
        <span key={i} className="h-1.5 w-px bg-[#eef4fe] shadow-[1px_1px_0_#8cb0f8]" />
      ))}
    </div>
    <button aria-label="向右" className="mr-0.5 ml-[22px] flex size-[17px] items-center justify-center rounded-[2px] border border-white bg-[#c3d3fd]">
      <svg viewBox="0 0 10 10" className="size-2.5">
        <path d="M3 1l4 4-4 4" fill="none" stroke="#4d6185" strokeWidth="2.500" />
      </svg>
    </button>
  </div>
);

const UserList = () => (
  <main className="flex min-w-0 flex-1 flex-col border-t border-l border-[#716f64] bg-white">
    <table className="w-full table-fixed border-collapse text-left">
      <colgroup>
        <col className="w-[99px]" />
        <col className="w-[150px]" />
        <col />
      </colgroup>
      <thead>
        <tr className="h-[17px] border-b border-[#aca899] bg-[#ece9d8]">
          <th className="border-r border-[#716f64] p-0 pl-1.5 font-normal"><Label text="名称" /></th>
          <th className="border-r border-[#716f64] p-0 pl-1.5 font-normal"><Label text="全名" /></th>
          <th className="p-0 pl-1.5 font-normal"><Label text="描述" /></th>
        </tr>
      </thead>
      <tbody>
        {accounts.map((account) => (
          <tr key={account.name} className="h-[17px]">
            <td className="p-0 pl-0.5">
              <span className="flex h-4 items-center gap-0.5">
                <AccountIcon disabled={account.disabled} />
                <Label text={account.name} />
              </span>
            </td>
            <td className="p-0 pl-1.5">
              <span className="flex h-4 items-center">
                {account.name === "Administrator" ? (
                  <svg viewBox="0 0 48 15" className="h-[15px] w-12">
                    <path d="M0 5l4-3 6-1 8 0 10 2 8-1 8 2 3 3-2 4-7 1-8 2-10 0-8 1-8-2-4-4z" fill="#fb0505" />
                  </svg>
                ) : (
                  <Label text={account.full} />
                )}
              </span>
            </td>
            <td className="overflow-hidden p-0 pl-1.5">
              <span className="flex h-4 items-center">
                <Label text={account.desc} />
              </span>
            </td>
          </tr>
        ))}
      </tbody>
    </table>
    <p className="mt-[52px] mb-8 pl-[27px] font-['Open_Sans','Noto_Sans_CJK_SC',sans-serif] text-[12px] leading-[17px] text-[#e02020]">
      到这里找到你新建的用户，右键删除，重新启动就可
      <br />
      进入Administrator帐户了
    </p>
    <ScrollBar />
  </main>
);

const StatusBar = () => (
  <footer className="flex h-[22px] items-center border-t border-[#8a8778] bg-gradient-to-b from-[#dedbc8] via-[#ece9d8] to-[#e2dfcc]">
    <div className="h-4 flex-1 border-r border-[#c5c2b0]" />
    <div className="h-4 w-[133px] border-r border-[#c5c2b0]" />
    <div className="mr-0.5 h-4 w-[85px] border-r border-[#c5c2b0]" />
  </footer>
);

const ManagementWindow = () => (
  <section className="mr-px flex flex-1 flex-col rounded-t-[6px] border-r-4 border-b-3 border-l-3 border-[#0a3ad0] bg-[#0a3ad0] leading-4">
    <TitleBar />
    <div className="flex flex-1 flex-col bg-[#ece9d8]">
      <MenuBar />
      <ToolBar />
      <div className="mt-1 flex flex-1 gap-1">
        <TreePane />
        <UserList />
      </div>
      <StatusBar />
    </div>
  </section>
);

const App = () => {
  return (
    <div className="flex min-h-screen flex-col bg-white font-['Noto_Sans_CJK_SC',sans-serif] text-[12px] text-black">
      <StartMenu />
      <ManagementWindow />
    </div>
  );
};

export default App;
